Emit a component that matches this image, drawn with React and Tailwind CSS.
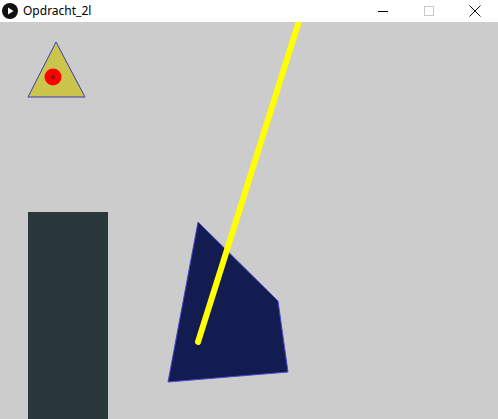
import React from 'react';

const TitleBar = () => (
  <div className="flex h-[22px] items-center bg-white">
    <svg width="18" height="18" viewBox="0 0 18 18" className="ml-[1px]">
      <circle cx="9" cy="9" r="8" fill="#111" />
      <path d="M7 5.5 L12.5 9 L7 12.5 Z" fill="#fff" />
    </svg>
    <span className="ml-[4px] text-[12px] text-black" style={{ fontFamily: '"Segoe UI", "Noto Sans", sans-serif' }}>
      Opdracht_2l
    </span>
    <div className="ml-auto flex h-full items-center">
      <div className="flex h-full w-[46px] items-center justify-center">
        <div className="h-px w-[10px] bg-black" />
      </div>
      <div className="flex h-full w-[46px] items-center justify-center">
        <div className="h-[10px] w-[10px] border border-[#c8c8c8]" />
      </div>
      <div className="flex h-full w-[46px] items-center justify-center">
        <svg width="12" height="12" viewBox="0 0 12 12">
          <path d="M0.5 0.5 L11.5 11.5 M11.5 0.5 L0.5 11.5" stroke="#111" strokeWidth="1" />
        </svg>
      </div>
    </div>
  </div>
);

export default function App() {
  return (
    <div className="flex h-[419px] w-[498px] flex-col overflow-hidden bg-[#cccccc]">
      <TitleBar />
      <svg width="498" height="397" viewBox="0 0 498 397" className="block">
        <polygon points="56,20 28,75 85,75" fill="#cbc54c" stroke="#3b3cb0" strokeWidth="1" />
        <circle cx="53" cy="55" r="8.5" fill="#ff0000" />
        <circle cx="53" cy="55" r="2" fill="#7a1a1a" />
        <rect x="28" y="190" width="80" height="207" fill="#29373a" />
        <polygon points="198,200 278,279 288,350 168,360" fill="#121c50" stroke="#4848d0" strokeWidth="1" />
        <line x1="198" y1="320" x2="305" y2="-20" stroke="#ffff00" strokeWidth="6" strokeLinecap="round" />
      </svg>
    </div>
  );
}
